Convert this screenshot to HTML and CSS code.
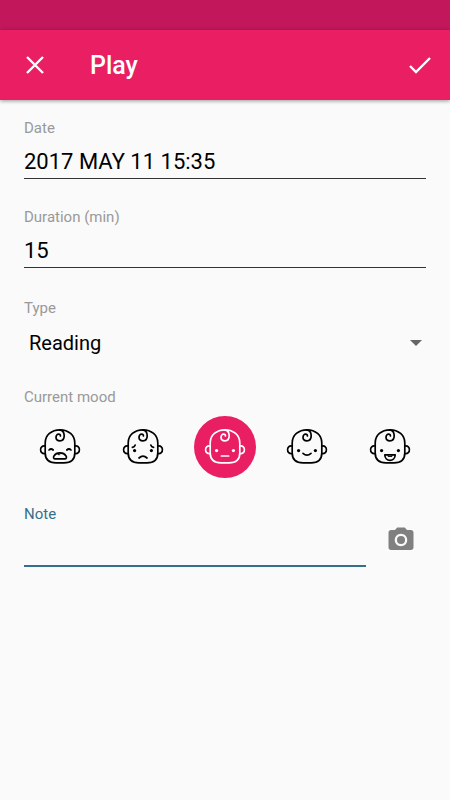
FILE: index.html
```html
<!DOCTYPE html>
<html lang="en">
<head>
    <meta charset="UTF-8">
    <meta name="viewport" content="width=device-width, initial-scale=1.0">
    <title>Play</title>
    <link rel="stylesheet" href="styles.css">
</head>
<body>
    <div class="status-bar"></div>
    <header class="toolbar">
        <button class="icon-btn" type="button" aria-label="Close">
            <svg class="icon" width="30" height="30" viewBox="0 0 30 30"><path d="M7 7L23 23M23 7L7 23"/></svg>
        </button>
        <h1>Play</h1>
        <button class="icon-btn" type="submit" form="play-form" aria-label="Save">
            <svg class="icon" width="30" height="30" viewBox="0 0 30 30"><path d="M5 16L11 22L25 8"/></svg>
        </button>
    </header>

    <form class="form" id="play-form">
        <div class="field">
            <label for="date">Date</label>
            <input class="line-input" id="date" type="text" value="2017 MAY 11 15:35">
        </div>
        <div class="field">
            <label for="duration">Duration (min)</label>
            <input class="line-input" id="duration" type="text" inputmode="numeric" value="15">
        </div>
        <div class="field field-type">
            <label for="type">Type</label>
            <div class="select-wrap">
                <select id="type">
                    <option>Reading</option>
                </select>
                <svg class="arrow" width="12" height="6" viewBox="0 0 12 6"><path d="M0 0H12L6 6Z"/></svg>
            </div>
        </div>

        <fieldset class="mood">
            <legend>Current mood</legend>
            <div class="mood-list">
                <label class="mood-item">
                    <input type="radio" name="mood" value="crying" aria-label="Crying">
                    <svg class="face" width="42" height="42" viewBox="0 0 42 42">
                        <use href="#baby"/>
                        <path d="M10 24Q12 22 14.2 24M27.8 24Q30 22 32 24"/>
                        <path d="M15.8 32.8C13.2 32.8 14.6 26.9 21 26.9S28.8 32.8 26.2 32.8Z"/>
                        <path class="thin" d="M19 28.6Q20.6 29.8 21.4 28"/>
                    </svg>
                </label>
                <label class="mood-item">
                    <input type="radio" name="mood" value="sad" aria-label="Sad">
                    <svg class="face" width="42" height="42" viewBox="0 0 42 42">
                        <use href="#baby"/>
                        <use href="#eyes"/>
                        <path d="M10.4 21.4Q12.6 21 13.2 19M31.6 21.4Q29.4 21 28.8 19"/>
                        <path d="M17 32Q21 28.4 25 32"/>
                    </svg>
                </label>
                <label class="mood-item">
                    <input type="radio" name="mood" value="neutral" aria-label="Neutral" checked>
                    <svg class="face" width="42" height="42" viewBox="0 0 42 42">
                        <use href="#baby"/>
                        <use href="#eyes"/>
                        <path d="M17.4 30H24.6"/>
                    </svg>
                </label>
                <label class="mood-item">
                    <input type="radio" name="mood" value="happy" aria-label="Happy">
                    <svg class="face" width="42" height="42" viewBox="0 0 42 42">
                        <use href="#baby"/>
                        <use href="#eyes"/>
                        <path d="M17 27.4Q21 31 25 27.4"/>
                    </svg>
                </label>
                <label class="mood-item">
                    <input type="radio" name="mood" value="laughing" aria-label="Laughing">
                    <svg class="face" width="42" height="42" viewBox="0 0 42 42">
                        <use href="#baby"/>
                        <use href="#eyes"/>
                        <path d="M15.8 28.8H26.2C26.2 36.2 15.8 36.2 15.8 28.8Z"/>
                        <path class="thin" d="M19 29V30.4H23V29"/>
                    </svg>
                </label>
            </div>
        </fieldset>

        <div class="note-row">
            <div class="note">
                <label for="note">Note</label>
                <input class="line-input" id="note" type="text">
            </div>
            <button class="camera-btn" type="button" aria-label="Add photo">
                <svg width="30" height="30" viewBox="0 0 24 24">
                    <path d="M9 2L7.17 4H4c-1.1 0-2 .9-2 2v12c0 1.1.9 2 2 2h16c1.1 0 2-.9 2-2V6c0-1.1-.9-2-2-2h-3.17L15 2H9zm3 15c-2.76 0-5-2.24-5-5s2.24-5 5-5 5 2.24 5 5-2.24 5-5 5z"/>
                    <circle cx="12" cy="12" r="3.2"/>
                </svg>
            </button>
        </div>
    </form>

    <svg class="defs" width="0" height="0" aria-hidden="true">
        <defs>
            <!-- head, ears and curl shared by all faces -->
            <g id="baby">
                <path d="M21 3.8C29.5 3.8 35.8 9.2 35.8 17V27C35.8 33.6 31.6 36.9 25 36.9H17C10.4 36.9 6.2 33.6 6.2 27V17C6.2 9.2 12.5 3.8 21 3.8Z"/>
                <path d="M6.2 20C0 18.6 0 28.8 6.2 27.6M35.8 20C42 18.6 42 28.8 35.8 27.6"/>
                <path d="M20.6 3.8C23.4 4.2 25.2 6.6 25.2 9.8C25.2 12.8 23.4 14.8 21 14.8C18.6 14.8 17 13.2 17 11.2C17 9.4 18.2 8.2 19.6 8.2C20.8 8.2 21.6 8.9 21.4 10"/>
            </g>
            <g id="eyes">
                <circle class="dot" cx="12.6" cy="24.6" r="1.6"/>
                <circle class="dot" cx="29.4" cy="24.6" r="1.6"/>
            </g>
        </defs>
    </svg>
</body>
</html>
```
FILE: styles.css
```css
* {
    box-sizing: border-box;
}

body {
    margin: 0;
    min-height: 100vh;
    background: #fafafa;
    color: #000;
    font-family: Roboto, sans-serif;
}

button {
    display: flex;
    padding: 0;
    border: none;
    background: none;
    cursor: pointer;
}

.status-bar {
    height: 30px;
    background: #c2185b;
}

.toolbar {
    display: flex;
    align-items: center;
    height: 70px;
    padding: 0 15px 0 20px;
    background: #e91e63;
    color: #fff;
    box-shadow: 0 1px 4px rgba(0, 0, 0, 0.4);
}

.toolbar h1 {
    flex: 1;
    margin: 0 0 0 40px;
    padding-top: 2px;
    font-size: 25px;
    font-weight: 500;
    line-height: 30px;
}

.icon {
    fill: none;
    stroke: #fff;
    stroke-width: 2.4;
}

.form {
    padding: 18px 24px;
}

.field {
    margin-bottom: 28px;
}

label,
legend {
    display: block;
    padding: 0;
    color: #999;
    font-size: 15px;
    line-height: 20px;
}

.line-input {
    display: block;
    width: 100%;
    height: 41px;
    padding: 6px 0 0;
    border: none;
    border-bottom: 1px solid #333;
    border-radius: 0;
    outline: none;
    background: none;
    color: #000;
    font-family: inherit;
    font-size: 22px;
}

.field-type {
    margin-top: 30px;
}

.select-wrap {
    display: flex;
    align-items: center;
    position: relative;
    height: 41px;
    padding-top: 8px;
}

select {
    width: 100%;
    padding: 0 24px 0 5px;
    border: none;
    outline: none;
    background: none;
    color: #000;
    font-family: inherit;
    font-size: 20px;
    line-height: 24px;
    appearance: none;
}

.arrow {
    position: absolute;
    right: 4px;
    fill: #666;
    pointer-events: none;
}

.mood {
    min-width: 0;
    margin: 0 -5px;
    padding: 0;
    border: none;
}

.mood legend {
    margin-left: 5px;
}

.mood-list {
    display: flex;
    padding-top: 9px;
}

.mood-item {
    display: flex;
    flex: 1;
    justify-content: center;
    cursor: pointer;
}

.mood-item input {
    position: absolute;
    opacity: 0;
}

.face {
    box-sizing: content-box;
    padding: 10px;
    border-radius: 50%;
    color: #000;
    fill: none;
    stroke: currentColor;
    stroke-width: 1.7;
    stroke-linecap: round;
    stroke-linejoin: round;
}

.face .thin {
    stroke-width: 1;
}

.dot {
    fill: currentColor;
    stroke: none;
}

.mood-item input:checked + .face {
    background: #e91e63;
    color: #fff;
}

.note-row {
    display: flex;
    align-items: flex-end;
    margin-top: 26px;
}

.note {
    flex: 1;
}

.note label {
    color: #35708a;
}

.note .line-input {
    height: 43px;
    border-bottom: 2px solid #35708a;
}

.camera-btn {
    margin: 0 10px 12px 20px;
}

.camera-btn svg {
    fill: #808080;
}

.defs {
    position: absolute;
}
```
